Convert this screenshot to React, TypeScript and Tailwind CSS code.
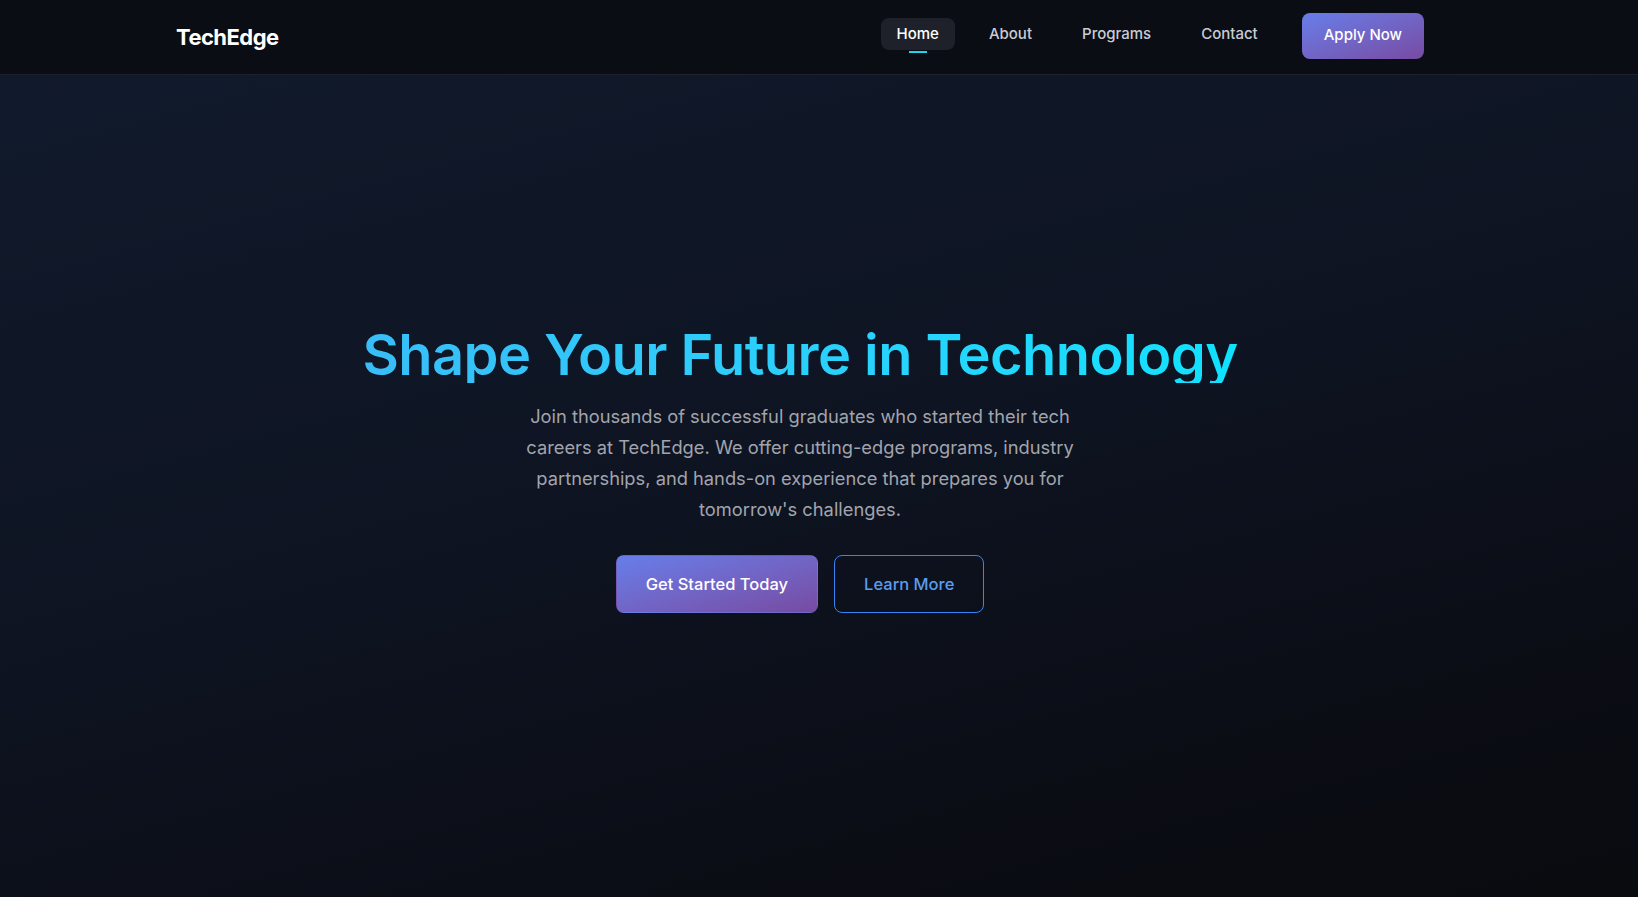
import React from 'react'

const links = ["Home", "About", "Programs", "Contact"]

const Navbar = () => {
   return (
      <nav className="bg-[#0b0d14] border-b border-[#1c212c]">
         <div className="pr-[38px]">
            <div className="max-w-7xl mx-auto px-4 h-[74px] flex items-center justify-between">
               <div className="text-[22px] font-bold text-white tracking-tight">TechEdge</div>
               <div className="flex items-center">
                  <ul className="flex items-center gap-[18px] mb-[6px]">
                     {links.map((link, index) => (
                        <li key={link}>
                           <a
                              href="#"
                              className={`relative block px-4 py-[6px] rounded-lg text-[15px] leading-5 font-medium ${index === 0 ? "bg-[#1e2129] text-white" : "text-[#c9ccd3]"}`}
                           >
                              {link}
                              {index === 0 && (
                                 <span className="absolute left-1/2 -translate-x-1/2 -bottom-[3px] w-[18px] h-[2px] bg-[#22d3ee]"></span>
                              )}
                           </a>
                        </li>
                     ))}
                  </ul>
                  <button className="ml-7 mb-[3px] px-[22px] h-[46px] rounded-lg text-[15px] font-medium text-white bg-gradient-to-br from-[#667eea] to-[#764ba2]">
                     Apply Now
                  </button>
               </div>
            </div>
         </div>
      </nav>
   )
}

const Hero = () => {
   return (
      <section className="min-h-[823px] bg-[linear-gradient(165deg,#111a2c_0%,#0e1422_45%,#0b0d15_80%,#0a0b0f_100%)] flex items-center">
         <div className="w-full pr-[38px] pb-[34px]">
            <div className="max-w-7xl mx-auto px-4 flex flex-col items-center text-center">
               <h1 className="text-[56px] leading-[1.0] font-semibold tracking-[-0.01em] bg-gradient-to-r from-[#38bdf8] to-[#0ee2ff] bg-clip-text text-transparent">
                  Shape Your Future in Technology
               </h1>
               <p className="mt-[18px] max-w-xl text-[18.3px] leading-[31px] text-[#a1a4ad]">
                  Join thousands of successful graduates who started their tech careers at TechEdge. We offer cutting-edge programs, industry partnerships, and hands-on experience that prepares you for tomorrow's challenges.
               </p>
               <div className="mt-[30px] flex items-center gap-4">
                  <button className="px-[29px] py-4 border border-transparent rounded-lg text-[16.5px] leading-6 font-medium text-white bg-gradient-to-br from-[#667eea] to-[#764ba2]">
                     Get Started Today
                  </button>
                  <button className="px-[29px] py-4 border border-[#3b82f6] rounded-lg text-[16.5px] leading-6 font-medium text-[#5b9cf0]">
                     Learn More
                  </button>
               </div>
            </div>
         </div>
      </section>
   )
}

const App = () => {
   return (
      <div className="min-h-screen bg-[#0a0b0f] font-['Inter',sans-serif]">
         <Navbar />
         <Hero />
      </div>
   )
}

export default App
